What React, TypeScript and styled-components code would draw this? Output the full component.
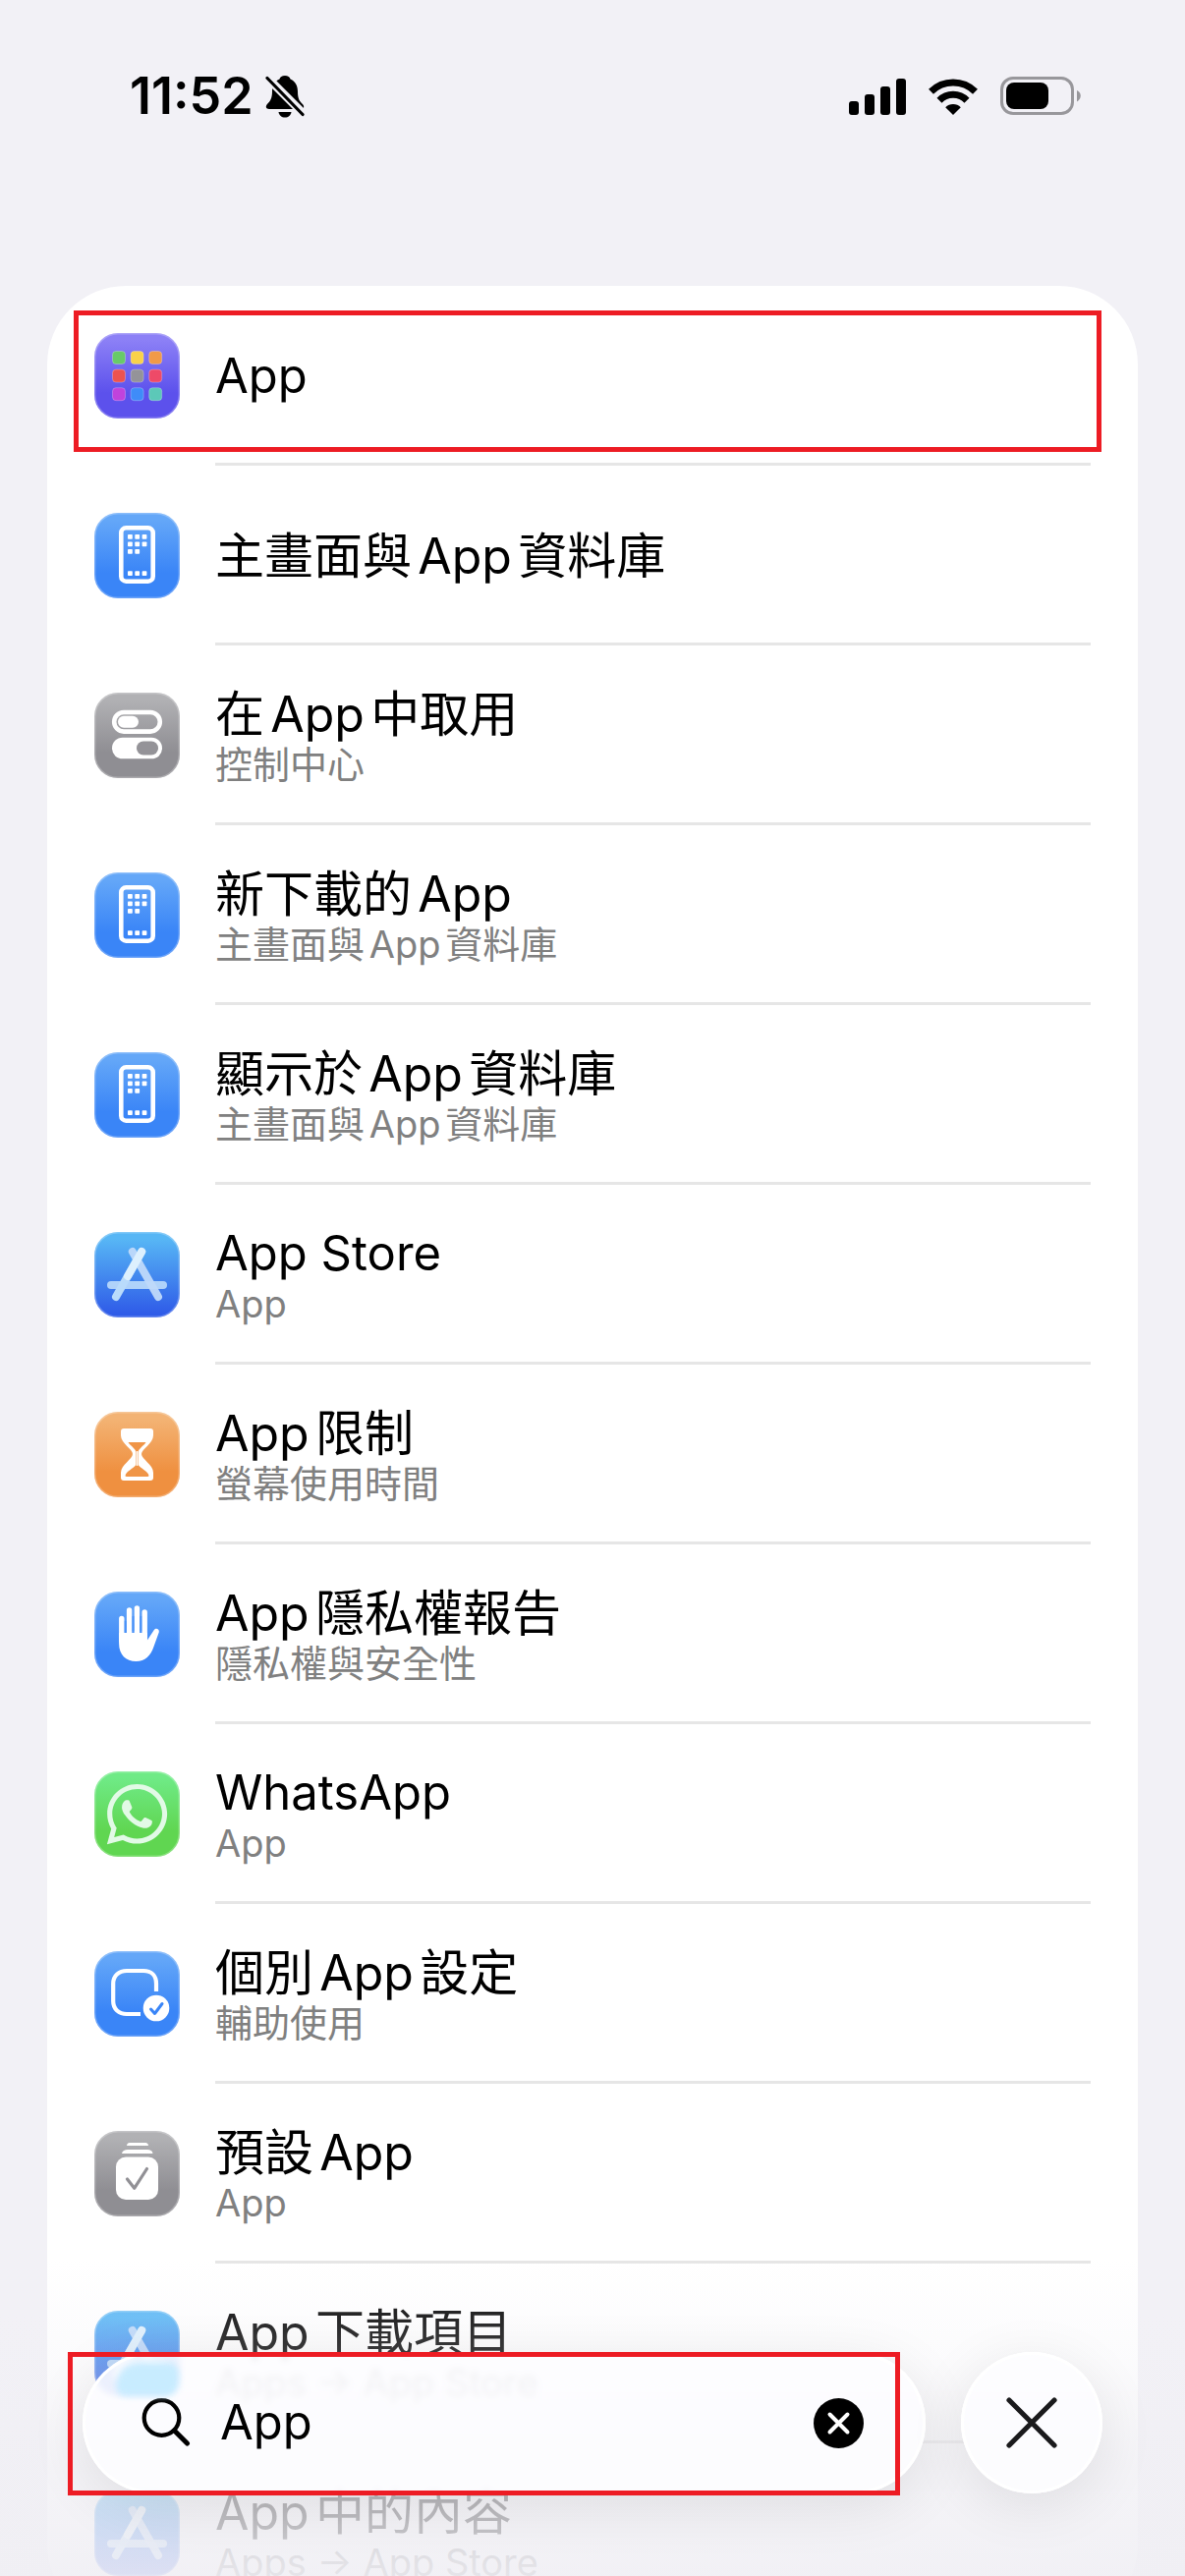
import React, { useId, useState } from 'react';
import styled, { createGlobalStyle, css } from 'styled-components';
import { FaWhatsapp } from 'react-icons/fa';

const GlobalStyle = createGlobalStyle`
  body {
    margin: 0;
    background: #f2f1f6;
    color: #000;
    font-family: Inter, 'Noto Sans CJK TC', sans-serif;
  }
`;

const Screen = styled.div`
  position: relative;
  display: flex;
  flex-direction: column;
  height: 100vh;
  overflow: hidden;
`;

const StatusBar = styled.header`
  display: flex;
  flex: none;
  align-items: center;
  justify-content: space-between;
  height: 196px;
  padding: 0 106px 0 132px;
`;

const StatusGroup = styled.div<{ $gap: number }>`
  display: flex;
  align-items: center;
  gap: ${({ $gap }) => $gap}px;
`;

const Clock = styled.time`
  font-size: 52px;
  font-weight: 600;
  line-height: 60px;
`;

const Results = styled.main`
  flex: 1;
  min-height: 0;
  padding: 95px 48px 0;
  overflow: auto;
  scrollbar-width: none;
`;

const Card = styled.ul`
  position: relative;
  margin: 0;
  padding: 0;
  list-style: none;
  background: #fff;
  border-radius: 80px;
`;

const RowLink = styled.a`
  display: flex;
  align-items: center;
  gap: 36px;
  padding: 0 48px;
  color: inherit;
  text-decoration: none;
`;

const RowText = styled.div`
  display: flex;
  flex: 1;
  flex-direction: column;
  justify-content: center;
  height: 183px;
  box-shadow: inset 0 -3px #e6e6e6;
  text-autospace: normal;
`;

const Title = styled.span<{ $latin: boolean }>`
  font-size: ${({ $latin }) => ($latin ? 49 : 50)}px;
  line-height: 58px;
`;

const Subtitle = styled.span`
  color: #808080;
  font-size: 38px;
  line-height: 44px;
`;

const Tile = styled.svg`
  flex: none;
  width: 87px;
  height: 87px;
`;

const highlight = css`
  position: absolute;
  box-sizing: border-box;
  border: 5px solid #ed1c24;
  pointer-events: none;
`;

const RowHighlight = styled.div`
  ${highlight}
  top: 25px;
  right: 37px;
  left: 27px;
  height: 144px;
`;

const SearchHighlight = styled.div`
  ${highlight}
  top: 0;
  right: 26px;
  left: -15px;
  height: 146px;
`;

const BottomBar = styled.div`
  position: absolute;
  right: 0;
  bottom: 0;
  left: 0;
  display: flex;
  gap: 36px;
  padding: 94px 84px 84px;
  background: linear-gradient(
    rgba(242, 241, 246, 0) 0,
    rgba(242, 241, 246, 0.14) 50px,
    rgba(241, 240, 245, 0.26) 100px,
    rgba(240, 239, 244, 0.72) 210px,
    rgba(240, 239, 244, 0.78) 260px,
    rgba(240, 239, 244, 0.9) 100%
  );
`;

const glass = css`
  height: 144px;
  background: rgba(253, 253, 255, 0.87);
  backdrop-filter: blur(3px);
  box-shadow: inset 0 0 0 3px #fff, 0 12px 60px rgba(0, 0, 0, 0.09);
`;

const SearchField = styled.form`
  ${glass}
  position: relative;
  display: flex;
  flex: 1;
  align-items: center;
  gap: 30px;
  min-width: 0;
  box-sizing: border-box;
  padding: 0 63px 0 60px;
  border-radius: 72px;
`;

// Light from the icon underneath, bent by the edge of the glass
const Refraction = styled.span`
  position: absolute;
  top: 11px;
  left: 34px;
  width: 64px;
  height: 34px;
  border-radius: 36px 16px 20px 14px;
  background: #c8ecff;
  filter: blur(3px);
`;

const SearchInput = styled.input`
  flex: 1;
  min-width: 0;
  padding: 0;
  border: 0;
  outline: 0;
  background: none;
  color: #000;
  font: inherit;
  font-size: 49px;
  line-height: 60px;
`;

const ClearButton = styled.button`
  display: flex;
  padding: 0;
  border: 0;
  background: none;
`;

const CloseButton = styled.button`
  ${glass}
  display: flex;
  flex: none;
  align-items: center;
  justify-content: center;
  width: 144px;
  padding: 0;
  border: 0;
  border-radius: 50%;
`;

type Tint = 'purple' | 'blue' | 'gray' | 'store' | 'orange' | 'green';

const TINTS: Record<Tint, [string, string]> = {
  purple: ['#8c80f6', '#5c51ec'],
  blue: ['#64a7f8', '#3a85f7'],
  gray: ['#b1b1b4', '#8f8e93'],
  store: ['#57b6f5', '#2f5ce8'],
  orange: ['#f3b374', '#ef9040'],
  green: ['#6fea86', '#60d651'],
};

const IconTile = ({ tint, children }: { tint: Tint, children: React.ReactNode }) => {
  const id = useId();
  const [from, to] = TINTS[tint];

  return (
    <Tile viewBox="0 0 87 87" aria-hidden="true">
      <defs>
        <linearGradient id={id} x1="0" y1="0" x2="0" y2="1">
          <stop offset="0.08" stopColor={from} />
          <stop offset={tint === 'store' ? 0.95 : 0.7} stopColor={to} />
        </linearGradient>
      </defs>
      <rect width="87" height="87" rx="24" fill={`url(#${id})`} />
      <rect x="0.75" y="0.75" width="85.5" height="85.5" rx="23.25" fill="none" stroke="#fff" strokeOpacity="0.25" strokeWidth="1.5" />
      {children}
    </Tile>
  );
};

const GRID_COLORS = ['#68cb68', '#f9d24a', '#f19a48', '#ed5350', '#949399', '#ee4a68', '#c043dc', '#3f8cf8', '#5cc8b8'];

const AppsIcon = () => (
  <IconTile tint="purple">
    {GRID_COLORS.map((color, i) => (
      <rect
        key={color}
        x={18.5 + (i % 3) * 18.6}
        y={18.5 + Math.floor(i / 3) * 18.6}
        width="13"
        height="13"
        rx="3.5"
        fill={color}
        stroke="#fff"
        strokeOpacity="0.25" />
    ))}
  </IconTile>
);

const PHONE_DOTS = [
  [34, 22], [41.3, 22], [48.6, 22],
  [34, 29.5], [41.3, 29.5], [48.6, 29.5],
  [34, 37], [41.3, 37],
  [34, 59.3], [41.3, 59.3], [48.6, 59.3],
];

const HomeScreenIcon = () => (
  <IconTile tint="blue">
    <rect x="27.3" y="15.3" width="32.4" height="54.4" rx="5" fill="none" stroke="#fff" strokeWidth="4.6" />
    {PHONE_DOTS.map(([x, y]) => <rect key={`${x}-${y}`} x={x} y={y} width="4.8" height="4.8" rx="0.8" fill="#fff" />)}
  </IconTile>
);

const ControlCenterIcon = () => (
  <IconTile tint="gray">
    <rect x="20.2" y="20" width="46.6" height="19.6" rx="9.8" fill="none" stroke="#fff" strokeWidth="4.6" />
    <rect x="24" y="23.8" width="21" height="12" rx="6" fill="#fff" />
    <rect x="18" y="45.7" width="51" height="21.6" rx="10.8" fill="#fff" />
    <rect x="43" y="49.6" width="22" height="13.8" rx="6.9" fill="#949398" />
  </IconTile>
);

const AppStoreIcon = () => (
  <IconTile tint="store">
    <g stroke="#fff" strokeWidth="8" strokeLinecap="round">
      <path d="M17 54H70" stroke="#c4e2fb" strokeOpacity="0.85" />
      <path d="M38.8 20L65 66" stroke="#bfd9fa" strokeOpacity="0.95" />
      <path d="M48.2 20L22 66" stroke="#b9dbfb" />
      <path d="M48.2 20L34 45" stroke="#e3f3fe" strokeOpacity="0.85" />
    </g>
  </IconTile>
);

const HourglassIcon = () => (
  <IconTile tint="orange">
    <path
      d="M30 17h27c2 0 3 1 3 3v4c0 8-12 14-12 19s12 11 12 19v5c0 2-1 3-3 3H30c-2 0-3-1-3-3v-5c0-8 12-14 12-19S27 32 27 24v-4c0-2 1-3 3-3z"
      fill="#fff" />
    <path
      d="M34.5 31H52.5C50 35 45.5 37 44.6 41V54C48 58 53 60 55 63.5C56 66 55 66 53 66H34C32 66 31 66 32 63.5C34 60 39 58 42.4 54V41C41.5 37 37 35 34.5 31z"
      fill="#f09547" />
    <path d="M43.5 40V55" stroke="#fff" strokeWidth="1.4" />
  </IconTile>
);

const PrivacyIcon = () => (
  <IconTile tint="blue">
    <g stroke="#fff" strokeWidth="5.4" strokeLinecap="round">
      <path d="M27.8 27.5V50M35.6 19V48M43.4 17V46M51.2 21V48" />
    </g>
    <path
      d="M25.1 42H53.9V49.5L60.5 39.5C62 36.3 66.5 37.8 65.8 41.2L60.5 56C57.5 65 51.5 71 42.5 71C32 71 25.1 64 25.1 53z"
      fill="#fff" />
    <path d="M31.7 30V41.5M39.5 25V40M47.3 25V40" stroke="#4a92f8" strokeWidth="1.8" />
  </IconTile>
);

const WhatsAppIcon = () => (
  <IconTile tint="green">
    <FaWhatsapp x="8.5" y="8.5" size={70} color="#e2fae6" />
  </IconTile>
);

const PerAppIcon = () => (
  <IconTile tint="blue">
    <path
      d="M63 41V33C63 25 58 20 50 20H33C25 20 19.2 25 19.2 33V51C19.2 59 25 64 33 64H47"
      fill="none"
      stroke="#fff"
      strokeWidth="4.2" />
    <circle cx="63" cy="58" r="13.3" fill="#fff" />
    <path d="M57.5 59L61.5 63.5L69 53.5" fill="none" stroke="#3a85f7" strokeWidth="3" strokeLinecap="round" strokeLinejoin="round" />
  </IconTile>
);

const DefaultAppsIcon = () => (
  <IconTile tint="gray">
    <path d="M33 15C33 12.500 35 12 37 12H51C53 12 55 12.500 55 15z" fill="#fff" />
    <path d="M28 23C28.500 20 31 19 34 19H54C57 19 59 20 59.500 23z" fill="#fff" />
    <rect x="22" y="26.5" width="43" height="43.5" rx="10" fill="#fff" />
    <path d="M33.5 49L40.7 58.3L53.5 38.5" fill="none" stroke="#919095" strokeWidth="3.2" strokeLinecap="round" strokeLinejoin="round" />
  </IconTile>
);

type Result = {
  icon: React.ComponentType,
  title: string,
  subtitle?: string,
}

const RESULTS: Array<Result> = [
  { icon: AppsIcon, title: 'App' },
  { icon: HomeScreenIcon, title: '主畫面與App資料庫' },
  { icon: ControlCenterIcon, title: '在App中取用', subtitle: '控制中心' },
  { icon: HomeScreenIcon, title: '新下載的App', subtitle: '主畫面與App資料庫' },
  { icon: HomeScreenIcon, title: '顯示於App資料庫', subtitle: '主畫面與App資料庫' },
  { icon: AppStoreIcon, title: 'App Store', subtitle: 'App' },
  { icon: HourglassIcon, title: 'App限制', subtitle: '螢幕使用時間' },
  { icon: PrivacyIcon, title: 'App隱私權報告', subtitle: '隱私權與安全性' },
  { icon: WhatsAppIcon, title: 'WhatsApp', subtitle: 'App' },
  { icon: PerAppIcon, title: '個別App設定', subtitle: '輔助使用' },
  { icon: DefaultAppsIcon, title: '預設App', subtitle: 'App' },
  { icon: AppStoreIcon, title: 'App下載項目', subtitle: 'Apps → App Store' },
  { icon: AppStoreIcon, title: 'App中的內容', subtitle: 'Apps → App Store' },
];

const isLatin = (text: string) => /^[\w\s]+$/.test(text);

const SilentIcon = () => (
  <svg width="40" height="44" viewBox="0 0 40 44" aria-hidden="true">
    <path d="M20 1C23 1 25 2.5 25.5 4.5C31 7 33 12 33 17C33 25 35 27 38 30C40 32.5 39.5 35 36 35H4C0.5 35 0 32 2 30C5 27 7 24 7 17C7 12 9 7 14.5 4.5C15 2.5 17 1 20 1z" />
    <path d="M13.5 38H26.5C26 41.5 23.5 43.5 20 43.5C16.5 43.5 14 41.5 13.5 38z" />
    <path d="M1 2L39 40" stroke="#f2f1f6" strokeWidth="8.5" />
    <path d="M2 3.5L38 40.5" stroke="#000" strokeWidth="3.2" strokeLinecap="round" />
  </svg>
);

const SignalIcon = () => (
  <svg width="58" height="38" viewBox="0 0 58 38" aria-hidden="true">
    <rect y="24" width="10" height="14" rx="3" />
    <rect x="16" y="17" width="10" height="21" rx="3" />
    <rect x="32" y="9" width="10" height="29" rx="3" />
    <rect x="48" y="1" width="10" height="37" rx="3" />
  </svg>
);

const WifiIcon = () => (
  <svg width="52" height="38" viewBox="0 0 52 38" aria-hidden="true">
    <g fill="none" stroke="#000" strokeWidth="7">
      <path d="M3.5 14.2A32 32 0 0 1 48.5 14.2" />
      <path d="M12 23.3A19.5 19.5 0 0 1 40 23.3" />
    </g>
    <path d="M26 38L18.2 30.3A11 11 0 0 1 33.8 30.3z" />
  </svg>
);

const BatteryIcon = () => (
  <svg width="82" height="40" viewBox="0 0 82 40" aria-hidden="true">
    <rect x="1.5" y="1.5" width="72" height="36" rx="11.5" fill="none" stroke="#98979b" strokeWidth="3" />
    <rect x="6" y="6" width="43" height="27" rx="8" />
    <path d="M78 14C83 16 83 23 78 25.5z" fill="#98979b" />
  </svg>
);

const SearchIcon = () => (
  <svg width="50" height="50" viewBox="0 0 50 50" fill="none" stroke="#000" strokeLinecap="round" aria-hidden="true">
    <circle cx="20.5" cy="20" r="17.8" strokeWidth="4.2" />
    <path d="M33.5 33L46.5 46" strokeWidth="5" />
  </svg>
);

const App = () => {
  const [query, setQuery] = useState('App');

  return (
    <Screen lang="zh-Hant">
      <GlobalStyle />
      <StatusBar>
        <StatusGroup $gap={12}>
          <Clock>11:52</Clock>
          <SilentIcon />
        </StatusGroup>
        <StatusGroup $gap={22}>
          <SignalIcon />
          <WifiIcon />
          <BatteryIcon />
        </StatusGroup>
      </StatusBar>

      <Results>
        <Card>
          {RESULTS.map(({ icon: ResultIcon, title, subtitle }) => (
            <li key={title}>
              <RowLink href="#">
                <ResultIcon />
                <RowText>
                  <Title $latin={isLatin(title)}>{title}</Title>
                  {subtitle && <Subtitle>{subtitle}</Subtitle>}
                </RowText>
              </RowLink>
            </li>
          ))}
          <RowHighlight as="li" />
        </Card>
      </Results>

      <BottomBar>
        <SearchField role="search" onSubmit={(event) => event.preventDefault()}>
          <Refraction />
          <SearchIcon />
          <SearchInput
            type="text"
            aria-label="搜尋"
            value={query}
            onChange={(event) => setQuery(event.target.value)} />
          <ClearButton type="button" aria-label="清除" onClick={() => setQuery('')}>
            <svg width="51" height="51" viewBox="0 0 51 51" aria-hidden="true">
              <circle cx="25.5" cy="25.5" r="25.5" />
              <path d="M16.5 16.5L34.5 34.5M34.5 16.5L16.5 34.5" stroke="#fff" strokeWidth="4" strokeLinecap="round" />
            </svg>
          </ClearButton>
          <SearchHighlight />
        </SearchField>
        <CloseButton type="button" aria-label="關閉">
          <svg width="52" height="52" viewBox="0 0 52 52" aria-hidden="true">
            <path d="M3 3L49 49M49 3L3 49" stroke="#1a1a1c" strokeWidth="5.2" strokeLinecap="round" />
          </svg>
        </CloseButton>
      </BottomBar>
    </Screen>
  );
};

export default App;
